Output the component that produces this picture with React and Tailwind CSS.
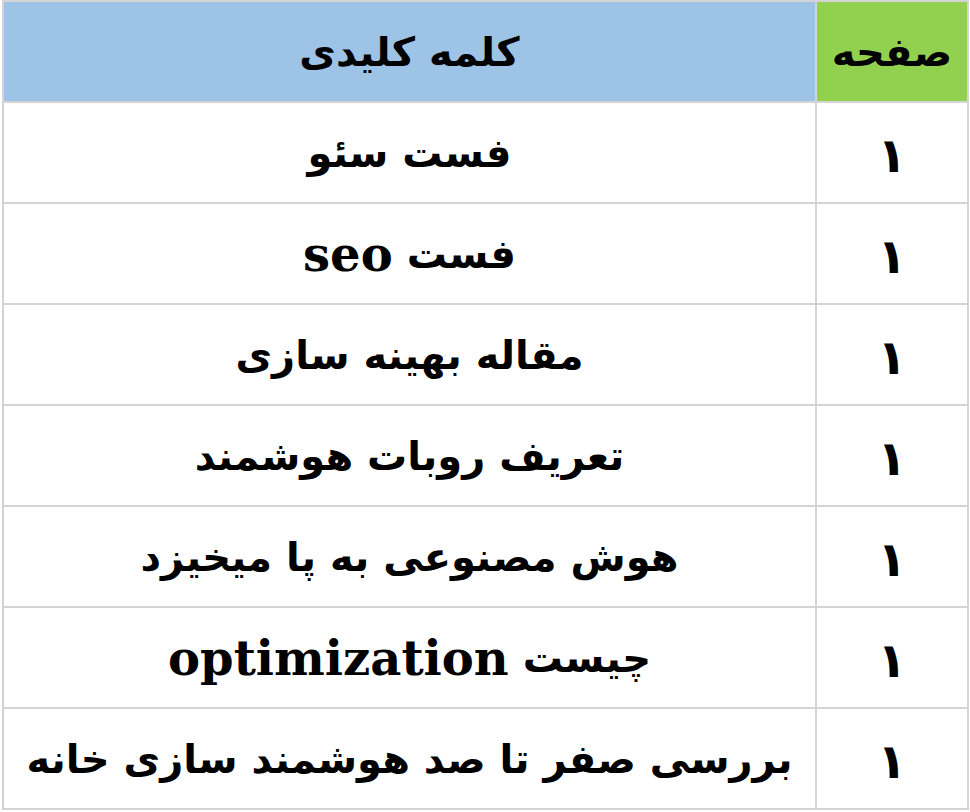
const rows = [
  ['فست سئو'],
  ['فست', 'seo'],
  ['مقاله بهینه سازی'],
  ['تعریف روبات هوشمند'],
  ['هوش مصنوعی به پا میخیزد'],
  ['چیست', 'optimization'],
  ['بررسی صفر تا صد هوشمند سازی خانه'],
]

const font = { fontFamily: '"DejaVu Serif", "DejaVu Sans", serif' }

export default function App() {
  return (
    <div className="w-[970px] h-[812px] bg-white overflow-hidden" style={font}>
      <div
        dir="rtl"
        className="ml-[2px] w-[967px] border-2 border-[#d4d4d4] grid grid-cols-[150px_2px_811px] text-black font-bold"
      >
        <div className="h-[99px] bg-[#92d050] flex items-center justify-center text-[40px]">صفحه</div>
        <div className="bg-[#d4d4d4]" />
        <div className="h-[99px] bg-[#9dc3e6] flex items-center justify-center text-[40px]">کلمه کلیدی</div>
        {rows.map(([fa, en], i) => (
          <div key={i} className="contents">
            <div className="col-span-3 h-[2px] bg-[#d4d4d4]" />
            <div className="h-[99px] flex items-center justify-center text-[48px] pt-[4px]">۱</div>
            <div className="bg-[#d4d4d4]" />
            <div className="h-[99px] flex items-center justify-center gap-[14px] text-[40px] whitespace-nowrap">
              <span>{fa}</span>
              {en && <span className="text-[48px]">{en}</span>}
            </div>
          </div>
        ))}
      </div>
    </div>
  )
}
